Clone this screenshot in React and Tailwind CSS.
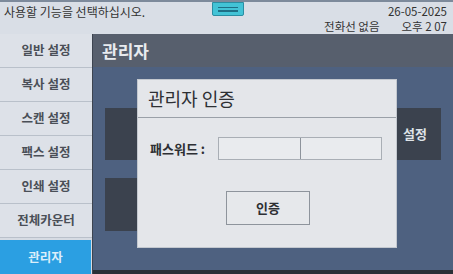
import React from "react";

const items = ["일반 설정", "복사 설정", "스캔 설정", "팩스 설정", "인쇄 설정", "전체카운터"];

export default function App() {
  return (
    <div
      className="relative w-[453px] h-[274px] overflow-hidden bg-[#cfd5de] flex flex-col"
      style={{ fontFamily: '"Noto Sans CJK KR", "Noto Sans", sans-serif' }}
    >
      {/* top bar */}
      <div className="relative h-[34px] shrink-0 bg-[#d9dee6] border-t-[2px] border-[#7d8a9b] flex justify-between px-[4px] text-[#333]">
        <div className="text-[12px] leading-[18px] pt-[1px]">사용할 기능을 선택하십시오.</div>
        <div className="flex flex-col items-end text-[11.5px] leading-[14px] pt-[2px] pr-[2px]">
          <div>26-05-2025</div>
          <div className="flex gap-[22px] mt-[1px]">
            <span>전화선 없음</span>
            <span>오후 2 07</span>
          </div>
        </div>
        <div className="absolute left-[212px] top-0 w-[32px] h-[14px] bg-[#43c3d6] border border-[#2a8ea3] rounded-b-[2px] flex flex-col items-center justify-center gap-[2px]">
          <div className="w-[20px] h-[1.5px] bg-[#1e6f86]" />
          <div className="w-[20px] h-[1.5px] bg-[#1e6f86]" />
        </div>
      </div>

      <div className="flex flex-1 min-h-0">
        {/* sidebar */}
        <div className="w-[92px] shrink-0 flex flex-col bg-[#d6dbe3] pt-0">
          {items.map((t) => (
            <div
              key={t}
              className="h-[34px] flex items-center justify-center border-b border-[#b9c0ca] bg-[#dde1e8] text-[12.5px] font-bold text-[#4a4f57]"
            >
              {t}
            </div>
          ))}
          <div className="h-[2px]" />
          <div className="flex-1 mr-[1px] bg-[#2b9fe2] flex items-center justify-center text-[12.5px] font-bold text-[#dbeefa]">
            관리자
          </div>
        </div>

        {/* main panel */}
        <div className="flex-1 flex flex-col bg-[#4e6180] border-l border-[#3d4450]">
          <div className="h-[33px] shrink-0 bg-[#575f6d] flex items-center pl-[9px] text-[17px] font-bold text-[#e8ebef]">
            관리자
          </div>
          <div className="flex-1 flex flex-col pl-[12px] pr-[12px] pt-[41px] gap-[18px]">
            <div className="h-[52px] bg-[#3b424e] flex items-center justify-end pr-[14px] text-[13px] font-bold text-[#dfe3e8]">
              설정
            </div>
            <div className="h-[53px] w-[260px] bg-[#3b424e]" />
          </div>
          <div className="h-[4px] bg-[#2b2f36]" />
        </div>
      </div>

      {/* dialog */}
      <div className="absolute left-[137px] top-[79px] w-[260px] h-[169px] bg-[#e4e6ea] border border-[#c3c8cf] flex flex-col">
        <div className="h-[38px] border-b border-[#9aa0a8] flex items-center pl-[10px] text-[18px] text-[#2d2f33]">
          관리자 인증
        </div>
        <div className="flex items-center mt-[19px] pl-[12px]">
          <span className="w-[68px] text-[13px] font-bold text-[#2d2f33]">패스워드 :</span>
          <div className="flex h-[23px] border border-[#a9aeb5] bg-[#e9ebee]">
            <div className="w-[82px] border-r border-[#8d939b]" />
            <div className="w-[80px]" />
          </div>
        </div>
        <div className="flex justify-center mt-[31px] pl-[2px]">
          <div className="w-[84px] h-[34px] border border-[#8e949c] bg-[#e6e8eb] flex items-center justify-center text-[13px] font-bold text-[#2d2f33]">
            인증
          </div>
        </div>
      </div>
    </div>
  );
}
